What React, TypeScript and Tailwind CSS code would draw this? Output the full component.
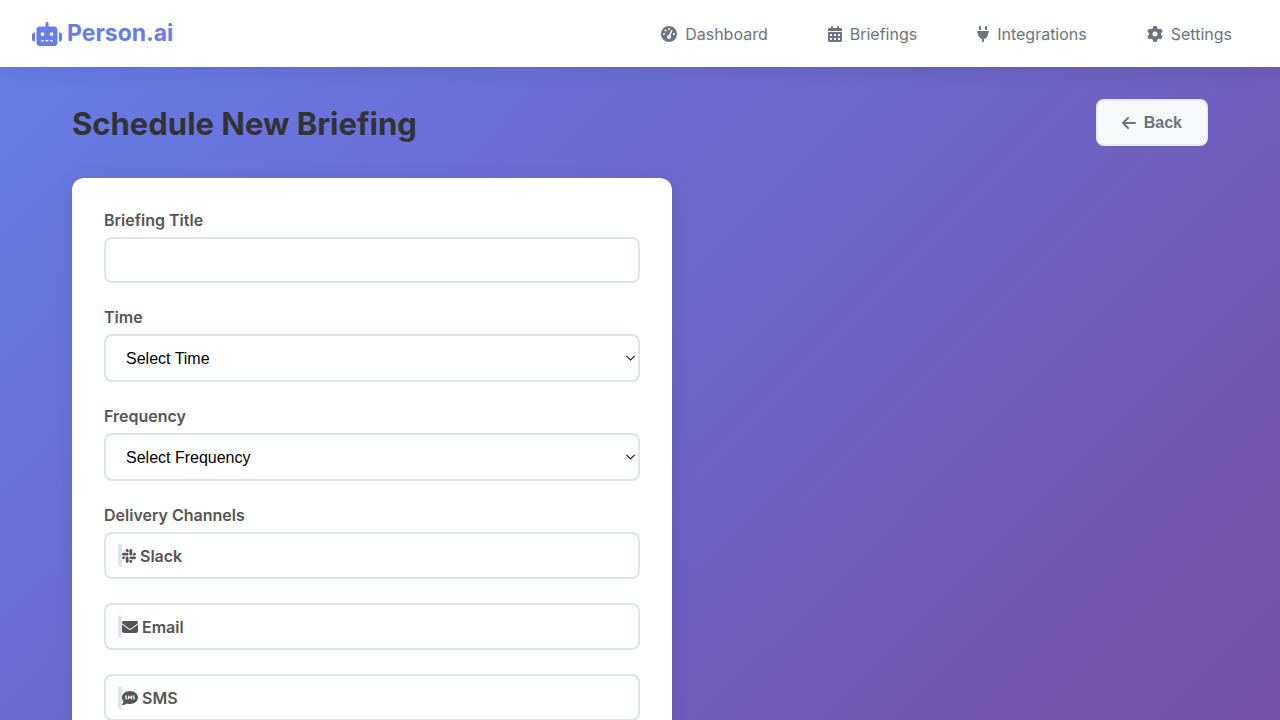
import type { ComponentType } from "react";
import {
  FaArrowLeft,
  FaCalendarDays,
  FaCommentSms,
  FaEnvelope,
  FaGaugeHigh,
  FaGear,
  FaPlug,
  FaRobot,
  FaSlack,
} from "react-icons/fa6";

type Icon = ComponentType<{ className?: string }>;

const navLinks: { label: string; icon: Icon; size: string }[] = [
  { label: "Dashboard", icon: FaGaugeHigh, size: "h-4 w-4" },
  { label: "Briefings", icon: FaCalendarDays, size: "h-4 w-3.5" },
  { label: "Integrations", icon: FaPlug, size: "h-4 w-3" },
  { label: "Settings", icon: FaGear, size: "h-4 w-4" },
];

const channels: { label: string; icon: Icon; size: string }[] = [
  { label: "Slack", icon: FaSlack, size: "h-4 w-3.5" },
  { label: "Email", icon: FaEnvelope, size: "h-4 w-4" },
  { label: "SMS", icon: FaCommentSms, size: "h-4 w-4" },
];

const labelClass = "mb-1.5 block leading-[21px] font-semibold text-[#555555]";
const selectClass =
  "h-12 w-full appearance-none rounded-lg border-2 border-[#e1e5e9] bg-white px-5 pt-2.5 pb-2 font-['Liberation_Sans',sans-serif] text-base text-black";

function Header() {
  return (
    <header className="relative flex h-[67px] items-center justify-between bg-white px-8 shadow-[0_2px_20px_rgba(0,0,0,0.1)]">
      <a href="#home" className="flex items-center gap-[5px] text-[23px] font-bold text-[#667eea]">
        <FaRobot className="h-6 w-[30px]" />
        Person.ai
      </a>
      <nav className="flex gap-7">
        {navLinks.map(({ label, icon: LinkIcon, size }) => (
          <a key={label} href={`#${label.toLowerCase()}`} className="flex items-center gap-2 px-4 py-2 text-[#6c757d]">
            <LinkIcon className={size} />
            {label}
          </a>
        ))}
      </nav>
    </header>
  );
}

function SelectField({ id, label, placeholder, options }: { id: string; label: string; placeholder: string; options: string[] }) {
  return (
    <div className="mb-6">
      <label htmlFor={id} className={labelClass}>{label}</label>
      <div className="relative">
        <select id={id} defaultValue="" className={selectClass}>
          <option value="">{placeholder}</option>
          {options.map((option) => (
            <option key={option}>{option}</option>
          ))}
        </select>
        <svg
          viewBox="0 0 10 6"
          aria-hidden="true"
          className="pointer-events-none absolute top-[21px] right-1 h-1.5 w-2.5"
          fill="none"
          stroke="#222222"
          strokeWidth="1.2"
        >
          <path d="M0.3 0.8 4.5 5 8.7 0.8" />
        </svg>
      </div>
    </div>
  );
}

export default function App() {
  return (
    <div className="min-h-screen bg-linear-[135deg,#667eea_0%,#764ba2_100%] font-[Inter,sans-serif] text-base text-[#333333]">
      <Header />
      <main className="mx-auto max-w-[1200px] px-8 pt-8 pb-40">
        <div className="mb-8 flex items-end justify-between">
          <h1 className="text-[31px] leading-[45px] font-bold">Schedule New Briefing</h1>
          <button
            type="button"
            className="flex h-[47px] items-center gap-2 rounded-lg border-2 border-[#e9ecef] bg-[#f8f9fa] px-6 font-['Liberation_Sans',sans-serif] font-bold text-[#6c757d]"
          >
            <FaArrowLeft className="h-4 w-3.5" />
            Back
          </button>
        </div>
        <form className="max-w-[600px] rounded-xl bg-white p-8 shadow-[0_4px_20px_rgba(0,0,0,0.1)]">
          <div className="mb-6">
            <label htmlFor="title" className={labelClass}>Briefing Title</label>
            <input
              id="title"
              type="text"
              className="block h-[46px] w-full rounded-lg border-2 border-[#e1e5e9] bg-white px-4 font-['Liberation_Sans',sans-serif]"
            />
          </div>
          <SelectField id="time" label="Time" placeholder="Select Time" options={["Morning", "Afternoon", "Evening"]} />
          <SelectField id="frequency" label="Frequency" placeholder="Select Frequency" options={["Daily", "Weekly", "Monthly"]} />
          <fieldset>
            <legend className={labelClass}>Delivery Channels</legend>
            <div className="flex flex-col gap-6">
              {channels.map(({ label, icon: ChannelIcon, size }) => (
                <label
                  key={label}
                  className="flex h-[47px] items-center rounded-lg border-2 border-[#e1e5e9] px-3 font-semibold text-[#555555]"
                >
                  <input type="checkbox" className="h-[23px] w-1 appearance-none rounded-xs bg-[#e1e5e9]" />
                  <ChannelIcon className={size} />
                  <span className="ml-1">{label}</span>
                </label>
              ))}
            </div>
          </fieldset>
        </form>
      </main>
    </div>
  );
}
